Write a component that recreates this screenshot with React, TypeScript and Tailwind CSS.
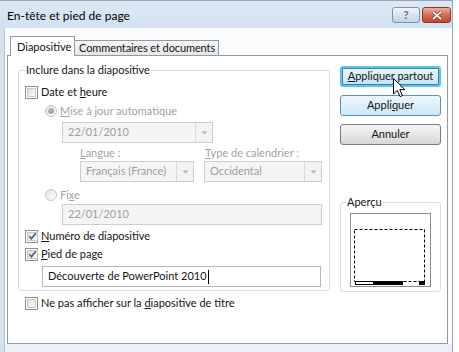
import React from "react";

function CheckBox({ checked }: { checked?: boolean }) {
  return (
    <span className="flex h-[13px] w-[13px] shrink-0 border border-[#8e8f8f] bg-white p-px">
      <span className="flex flex-1 items-center justify-center border border-[#c9c9c9] bg-linear-to-br from-[#dedede] to-[#fbfbfb]">
        {checked && (
          <svg width="9" height="9" viewBox="0 0 9 9">
            <path d="M1.3 4.3 L3.4 6.8 L7.8 1.2" fill="none" stroke="#4a5c83" strokeWidth="1.6" />
          </svg>
        )}
      </span>
    </span>
  );
}

function Radio({ selected }: { selected?: boolean }) {
  return (
    <span className="flex h-[12px] w-[12px] shrink-0 items-center justify-center rounded-full border border-[#c3c3c3] bg-linear-to-br from-[#e4e4e4] to-white">
      {selected && <span className="h-[6px] w-[6px] rounded-full bg-linear-to-br from-[#bdbdbd] to-[#9a9a9a]" />}
    </span>
  );
}

function Combo({ text, className }: { text: string; className: string }) {
  return (
    <div className={"flex h-[21px] border border-[#c7cfd8] bg-[#f5f5f5] " + className}>
      <span className="flex flex-1 items-center pl-[5px] text-[#9d9d9d]">{text}</span>
      <span className="flex w-[17px] items-center justify-center border-l border-[#d9dde2] bg-[#f3f3f3]">
        <svg width="7" height="4" viewBox="0 0 7 4">
          <path d="M0.5 0.5 L3.5 3.5 L6.5 0.5 Z" fill="#b3b3b3" />
        </svg>
      </span>
    </div>
  );
}

export default function App() {
  return (
    <div className="relative h-[352px] w-[459px] overflow-hidden bg-white font-['Lato','Liberation_Sans',sans-serif] text-[11px] text-[#141414]">
      <div className="flex h-full w-[453px] flex-col border-t border-r border-[#95a6b8]">
        {/* title bar */}
        <div className="flex h-[27px] shrink-0 items-center bg-linear-to-b from-[#dde8f4] to-[#d3e1f0] pl-[7px] pr-px">
          <span className="pt-[2px] text-[12px] text-black">En-tête et pied de page</span>
          <div className="ml-auto flex gap-[2px] pt-[1px]">
            <div className="flex h-[16px] w-[28px] items-center justify-center rounded-[3px] border border-[#7f91a6] bg-linear-to-b from-[#f2f6fa] via-[#d9e3ee] to-[#c4d3e4] text-[11px] font-bold text-[#5b6d82]">
              ?
            </div>
            <div className="flex h-[16px] w-[29px] items-center justify-center rounded-[3px] border border-[#8f3522] bg-linear-to-b from-[#eab0a2] via-[#d46c55] to-[#c3462e]">
              <svg width="12" height="9" viewBox="0 0 12 9">
                <path d="M2 1 L10 8 M10 1 L2 8" stroke="#7a2a1a" strokeWidth="3" />
                <path d="M2 1 L10 8 M10 1 L2 8" stroke="#ffffff" strokeWidth="1.7" />
              </svg>
            </div>
          </div>
        </div>

        <div className="flex flex-1">
          <div className="w-[4px] bg-[#d3e1ef]" />
          <div className="flex flex-1 flex-col border-l border-[#b6c3d1] bg-[#fbfcfd] pt-[8px]">
            {/* tabs */}
            <div className="ml-[5px] flex items-end whitespace-nowrap">
              <div className="relative z-10 -mb-px flex h-[20px] w-[65px] items-start border border-b-0 border-[#8e9aa6] bg-white pl-[6px] pt-[2px]">
                Diapositive
              </div>
              <div className="-ml-px flex h-[15px] w-[145px] items-center border border-b-0 border-[#8e9aa6] bg-linear-to-b from-[#f6f6f6] to-[#e6e6e6] pl-[4px] pt-px tracking-[-0.1px]">
                Commentaires et documents
              </div>
            </div>

            {/* panel */}
            <div className="ml-[2px] flex h-[289px] w-[441px] gap-[10px] border border-[#8e9aa6] bg-white pl-[10px]">
              <div className="flex flex-col">
                <fieldset className="mt-[6px] flex w-[312px] flex-col rounded-[3px] border border-[#d6dee5] pb-[3px] pl-[6px]">
                  <legend className="px-px leading-[16px]">Inclure dans la diapositive</legend>
                  <div className="mt-[5px] flex h-[18px] items-center gap-[3px]">
                    <CheckBox />
                    <span>
                      Date et <span className="underline">h</span>eure
                    </span>
                  </div>
                  <div className="mt-px ml-[20px] flex h-[18px] items-center gap-[3px] text-[#a2a2a2]">
                    <Radio selected />
                    <span>
                      <span className="underline">M</span>ise à jour automatique
                    </span>
                  </div>
                  <Combo text="22/01/2010" className="mt-[2px] ml-[37px] w-[151px]" />
                  <div className="mt-[2px] ml-[55px] flex h-[16px] items-center text-[#a2a2a2]">
                    <span className="w-[125px]">
                      <span className="underline">L</span>angue :
                    </span>
                    <span>
                      <span className="underline">T</span>ype de calendrier :
                    </span>
                  </div>
                  <div className="ml-[55px] flex gap-[10px]">
                    <Combo text="Français (France)" className="w-[114px]" />
                    <Combo text="Occidental" className="w-[118px]" />
                  </div>
                  <div className="mt-[4px] ml-[20px] flex h-[18px] items-center gap-[3px] text-[#a2a2a2]">
                    <Radio />
                    <span>
                      Fi<span className="underline">x</span>e
                    </span>
                  </div>
                  <div className="ml-[37px] flex h-[21px] w-[260px] items-center border border-[#c7cfd8] bg-[#f5f5f5] pl-[5px] text-[#9d9d9d]">
                    22/01/2010
                  </div>
                  <div className="mt-[2px] flex h-[18px] items-center gap-[3px]">
                    <CheckBox checked />
                    <span>
                      <span className="underline">N</span>uméro de diapositive
                    </span>
                  </div>
                  <div className="flex h-[18px] items-center gap-[3px]">
                    <CheckBox checked />
                    <span>
                      <span className="underline">P</span>ied de page
                    </span>
                  </div>
                  <div className="mt-[3px] ml-[17px] flex h-[21px] w-[279px] items-center border border-[#b3b8bf] bg-white pl-[5px]">
                    Découverte de PowerPoint 2010
                    <span className="ml-px h-[14px] w-px bg-black" />
                  </div>
                </fieldset>
                <div className="mt-[3px] ml-[7px] flex h-[18px] items-center gap-[3px]">
                  <CheckBox />
                  <span>
                    Ne pas afficher sur la <span className="underline">d</span>iapositive de titre
                  </span>
                </div>
              </div>

              <div className="mt-[10px] flex w-[101px] flex-col">
                <div className="flex h-[21px] items-center justify-center rounded-[3px] border-2 border-[#5ec3e6] bg-linear-to-b from-[#eaf6fd] to-[#c2e4f6] shadow-[inset_0_0_0_1px_#3c7fb1]">
                  <span>
                    <span className="underline">A</span>ppliquer partout
                  </span>
                </div>
                <div className="mt-[8px] flex h-[21px] items-center justify-center rounded-[3px] border border-[#5e8fb4] bg-linear-to-b from-[#eef7fd] to-[#cde7f7]">
                  <span>
                    Appli<span className="underline">q</span>uer
                  </span>
                </div>
                <div className="mt-[8px] flex h-[21px] items-center justify-center rounded-[3px] border border-[#7d7d7d] bg-linear-to-b from-[#f4f4f4] via-[#e8e8e8] to-[#d6d6d6]">
                  Annuler
                </div>
                <fieldset className="mt-[49px] flex flex-col rounded-[3px] border border-[#d6dee5] pb-[4px]">
                  <legend className="ml-[5px] px-px leading-[16px]">Aperçu</legend>
                  <svg className="mt-[3px] ml-[9px]" width="81" height="74" viewBox="0 0 81 74">
                    <rect x="0.5" y="0.5" width="80" height="73" fill="#fff" stroke="#8d8d8d" />
                    <rect x="4.5" y="16.5" width="70" height="52" fill="none" stroke="#000" strokeDasharray="3 2" />
                    <rect x="5.5" y="68.5" width="18" height="3" fill="#fff" stroke="#000" />
                    <rect x="24" y="68" width="29" height="4" fill="#000" />
                    <rect x="69" y="68" width="6" height="4" fill="#000" />
                  </svg>
                </fieldset>
              </div>
            </div>
            <div className="flex-1 bg-[#eaf0f6]" />
          </div>
        </div>
      </div>

      {/* mouse pointer */}
      <svg className="absolute left-[393px] top-[78px]" width="13" height="20" viewBox="0 0 13 20">
        <path d="M0.5 0.5 L0.5 16 L4.3 12.4 L7 18.6 L9.4 17.6 L6.8 11.6 L11.8 11.6 Z" fill="#fff" stroke="#000" strokeWidth="1" />
      </svg>
    </div>
  );
}
